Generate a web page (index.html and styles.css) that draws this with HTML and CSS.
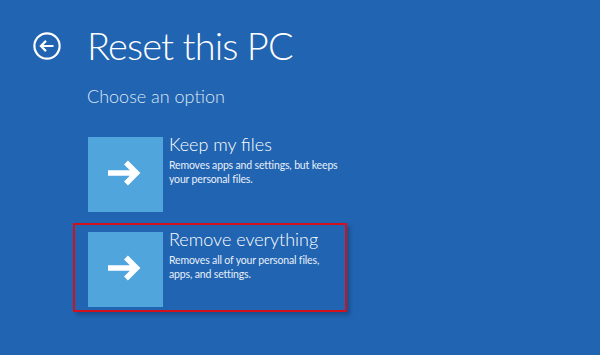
FILE: index.html
```html
<!DOCTYPE html>
<html lang="en">
<head>
    <meta charset="UTF-8">
    <title>Reset this PC</title>
    <link rel="stylesheet" href="styles.css">
</head>
<body>
    <div class="screen">
        <div class="header">
            <svg class="back" width="30" height="30" viewBox="0 0 30 30">
                <circle cx="15" cy="15" r="12.6" fill="none" stroke="#fff" stroke-width="2.2"/>
                <path d="M21.5 15 H9 M14 9.9 L8.9 15 L14 20.1" fill="none" stroke="#fff" stroke-width="2.2"/>
            </svg>
            <h1>Reset this PC</h1>
        </div>
        <div class="subtitle">Choose an option</div>
        <div class="options">
            <div class="option">
                <div class="tile">
                    <svg width="34" height="28" viewBox="0 0 34 28">
                        <path d="M1 14 H30 M19 3.5 L29.5 14 L19 24.5" fill="none" stroke="#fff" stroke-width="5.5"/>
                    </svg>
                </div>
                <div class="option-text">
                    <div class="option-title">Keep my files</div>
                    <div class="option-desc">Removes apps and settings, but keeps<br>your personal files.</div>
                </div>
            </div>
            <div class="option selected">
                <div class="tile">
                    <svg width="34" height="28" viewBox="0 0 34 28">
                        <path d="M1 14 H30 M19 3.5 L29.5 14 L19 24.5" fill="none" stroke="#fff" stroke-width="5.5"/>
                    </svg>
                </div>
                <div class="option-text">
                    <div class="option-title">Remove everything</div>
                    <div class="option-desc">Removes all of your personal files,<br>apps, and settings.</div>
                </div>
            </div>
        </div>
    </div>
</body>
</html>
```

FILE: styles.css
```css
body {
    margin: 0;
    padding: 0;
    background-color: #2164b1;
    font-family: Lato, "Open Sans", sans-serif;
    color: #fff;
}
.screen {
    width: 600px;
    height: 355px;
    box-sizing: border-box;
    padding: 20px 0 0 32px;
    overflow: hidden;
}
.header {
    display: flex;
    align-items: center;
    gap: 25px;
}
.back {
    flex: none;
    margin-top: 1px;
}
h1 {
    margin: 0;
    font-size: 38px;
    font-weight: 300;
    line-height: 50px;
    letter-spacing: -0.9px;
}
.subtitle {
    margin: 15px 0 0 55px;
    font-size: 18px;
    font-weight: 300;
    color: #dce7f4;
    line-height: 22px;
}
.options {
    display: flex;
    flex-direction: column;
    gap: 6px;
    margin: 21px 0 0 41px;
}
.option {
    display: flex;
    gap: 6px;
    width: 274px;
    height: 89px;
    box-sizing: border-box;
    padding: 7px 13px 3px 13px;
    border: 2px solid transparent;
}
.option.selected {
    border-color: #d2111d;
    box-shadow: 3px 3px 4px rgba(0, 0, 0, 0.22);
}
.tile {
    flex: 0 0 75px;
    height: 75px;
    background: #4fa5dc;
    display: flex;
    align-items: center;
    justify-content: center;
}
.tile svg {
    margin: -4px 4px 0 0;
}
.option-title {
    font-size: 18px;
    font-weight: 300;
    line-height: 20px;
    margin-top: -3px;
    white-space: nowrap;
}
.option-desc {
    margin-top: 4px;
    font-size: 10.5px;
    line-height: 14px;
    letter-spacing: -0.15px;
    color: #e8f0f9;
    white-space: nowrap;
}
```
